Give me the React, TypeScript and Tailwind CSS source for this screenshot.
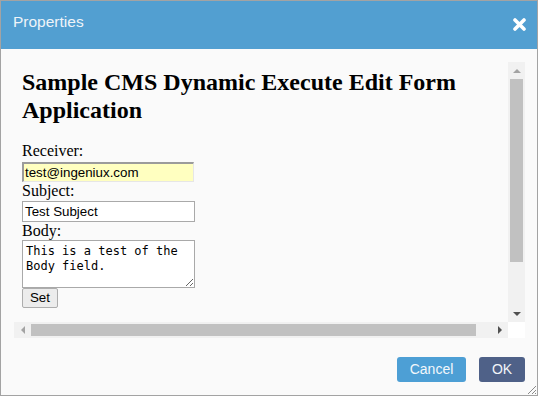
import React from "react";

const serif = { fontFamily: '"Liberation Serif", "Times New Roman", serif' };
const sans = { fontFamily: '"Liberation Sans", Arial, sans-serif' };
const mono = { fontFamily: '"DejaVu Sans Mono", "Liberation Mono", monospace' };

function Tri({ dir, color }: { dir: "up" | "down" | "left" | "right"; color: string }) {
  const pts =
    dir === "up"
      ? "0,4 4,0 8,4"
      : dir === "down"
      ? "0,0 8,0 4,4"
      : dir === "left"
      ? "4,0 4,8 0,4"
      : "0,0 0,8 4,4";
  const w = dir === "up" || dir === "down" ? 8 : 4;
  const h = dir === "up" || dir === "down" ? 4 : 8;
  return (
    <svg width={w} height={h} viewBox={`0 0 ${w} ${h}`}>
      <polygon points={pts} fill={color} />
    </svg>
  );
}

export default function App() {
  return (
    <div
      className="relative w-[538px] h-[396px] border border-[#a3a3a3] bg-[#fafafa] flex flex-col overflow-hidden"
      style={sans}
    >
      {/* Header */}
      <div className="h-[48px] shrink-0 bg-[#529fd1] flex items-start justify-between pl-[12px] pr-[11px]">
        <div className="pt-[11px] text-[15.5px] leading-[20px] text-[#eef4f9]">Properties</div>
        <svg className="mt-[17px]" width="13" height="13" viewBox="0 0 13 13">
          <path
            d="M2 2 L11 11 M11 2 L2 11"
            stroke="#ffffff"
            strokeWidth="3.6"
            strokeLinecap="round"
          />
        </svg>
      </div>

      {/* Body */}
      <div className="pl-[13px] pt-[13px]">
        <div className="grid grid-cols-[494px_17px] grid-rows-[260px_16px] w-[511px] h-[276px]">
          {/* iframe content */}
          <div className="overflow-hidden bg-[#fafafa] pl-[8px] pt-[6px] text-black">
            <h1
              className="text-[24px] leading-[28px] font-bold w-[520px] m-0 mb-[18px]"
              style={serif}
            >
              Sample CMS Dynamic Execute Edit Form
              <br />
              Application
            </h1>
            <div className="text-[16px] leading-[18px] h-[18px] mb-[2px]" style={serif}>
              Receiver:
            </div>
            <div
              className="w-[172px] h-[20px] bg-[#ffffc0] border-t-2 border-l-2 border-b border-r border-t-[#9b9b9b] border-l-[#9b9b9b] border-b-[#e6e6e6] border-r-[#e6e6e6] pl-[1px] text-[13.33px] leading-[17px] text-black"
              style={sans}
            >
              test@ingeniux.com
            </div>
            <div className="text-[16px] leading-[18px] h-[18px] mb-[1px]" style={serif}>
              Subject:
            </div>
            <div
              className="w-[173px] h-[21px] bg-white border border-[#a9a9a9] pl-[2px] text-[13.33px] leading-[19px] text-black"
              style={sans}
            >
              Test Subject
            </div>
            <div className="text-[16px] leading-[18px] h-[18px]" style={serif}>
              Body:
            </div>
            <textarea
              readOnly
              className="block w-[173px] h-[48px] bg-white border border-[#a9a9a9] pl-[3px] pt-[3px] text-[12px] leading-[15px] text-black outline-none resize"
              style={mono}
              defaultValue={"This is a test of the Body field."}
            />
            <button
              className="block w-[36px] h-[20px] bg-[#ececec] border border-[#adadad] rounded-[2px] text-[13.33px] leading-[16px] text-black"
              style={sans}
            >
              Set
            </button>
          </div>

          {/* vertical scrollbar */}
          <div className="bg-[#f1f1f1] flex flex-col">
            <div className="h-[17px] flex items-center justify-center">
              <Tri dir="up" color="#a3a3a3" />
            </div>
            <div className="flex-1 px-[2px]">
              <div className="h-[183px] bg-[#c1c1c1]" />
            </div>
            <div className="h-[17px] flex items-center justify-center">
              <Tri dir="down" color="#505050" />
            </div>
          </div>

          {/* horizontal scrollbar */}
          <div className="bg-[#f1f1f1] flex flex-row">
            <div className="w-[17px] flex items-center justify-center">
              <Tri dir="left" color="#a3a3a3" />
            </div>
            <div className="flex-1 py-[2px]">
              <div className="w-[445px] h-full bg-[#c1c1c1]" />
            </div>
            <div className="w-[17px] flex items-center justify-center">
              <Tri dir="right" color="#505050" />
            </div>
          </div>
          <div className="bg-white" />
        </div>
      </div>

      {/* Footer */}
      <div className="flex justify-end gap-[13px] pr-[12px] pt-[19px]">
        <button className="w-[69px] h-[25px] rounded-[3px] bg-[#4d9fd5] text-[14px] text-[#f2f7fb] leading-[25px]">
          Cancel
        </button>
        <button className="w-[46px] h-[25px] rounded-[3px] bg-[#4f6188] text-[14px] text-[#f2f5f9] leading-[25px]">
          OK
        </button>
      </div>

      {/* resize grip */}
      <svg className="absolute right-0 bottom-0" width="11" height="11" viewBox="0 0 11 11">
        <path d="M10 2 L2 10 M10 6 L6 10 M10 9 L9 10" stroke="#8a8a8a" strokeWidth="1" />
      </svg>
    </div>
  );
}
